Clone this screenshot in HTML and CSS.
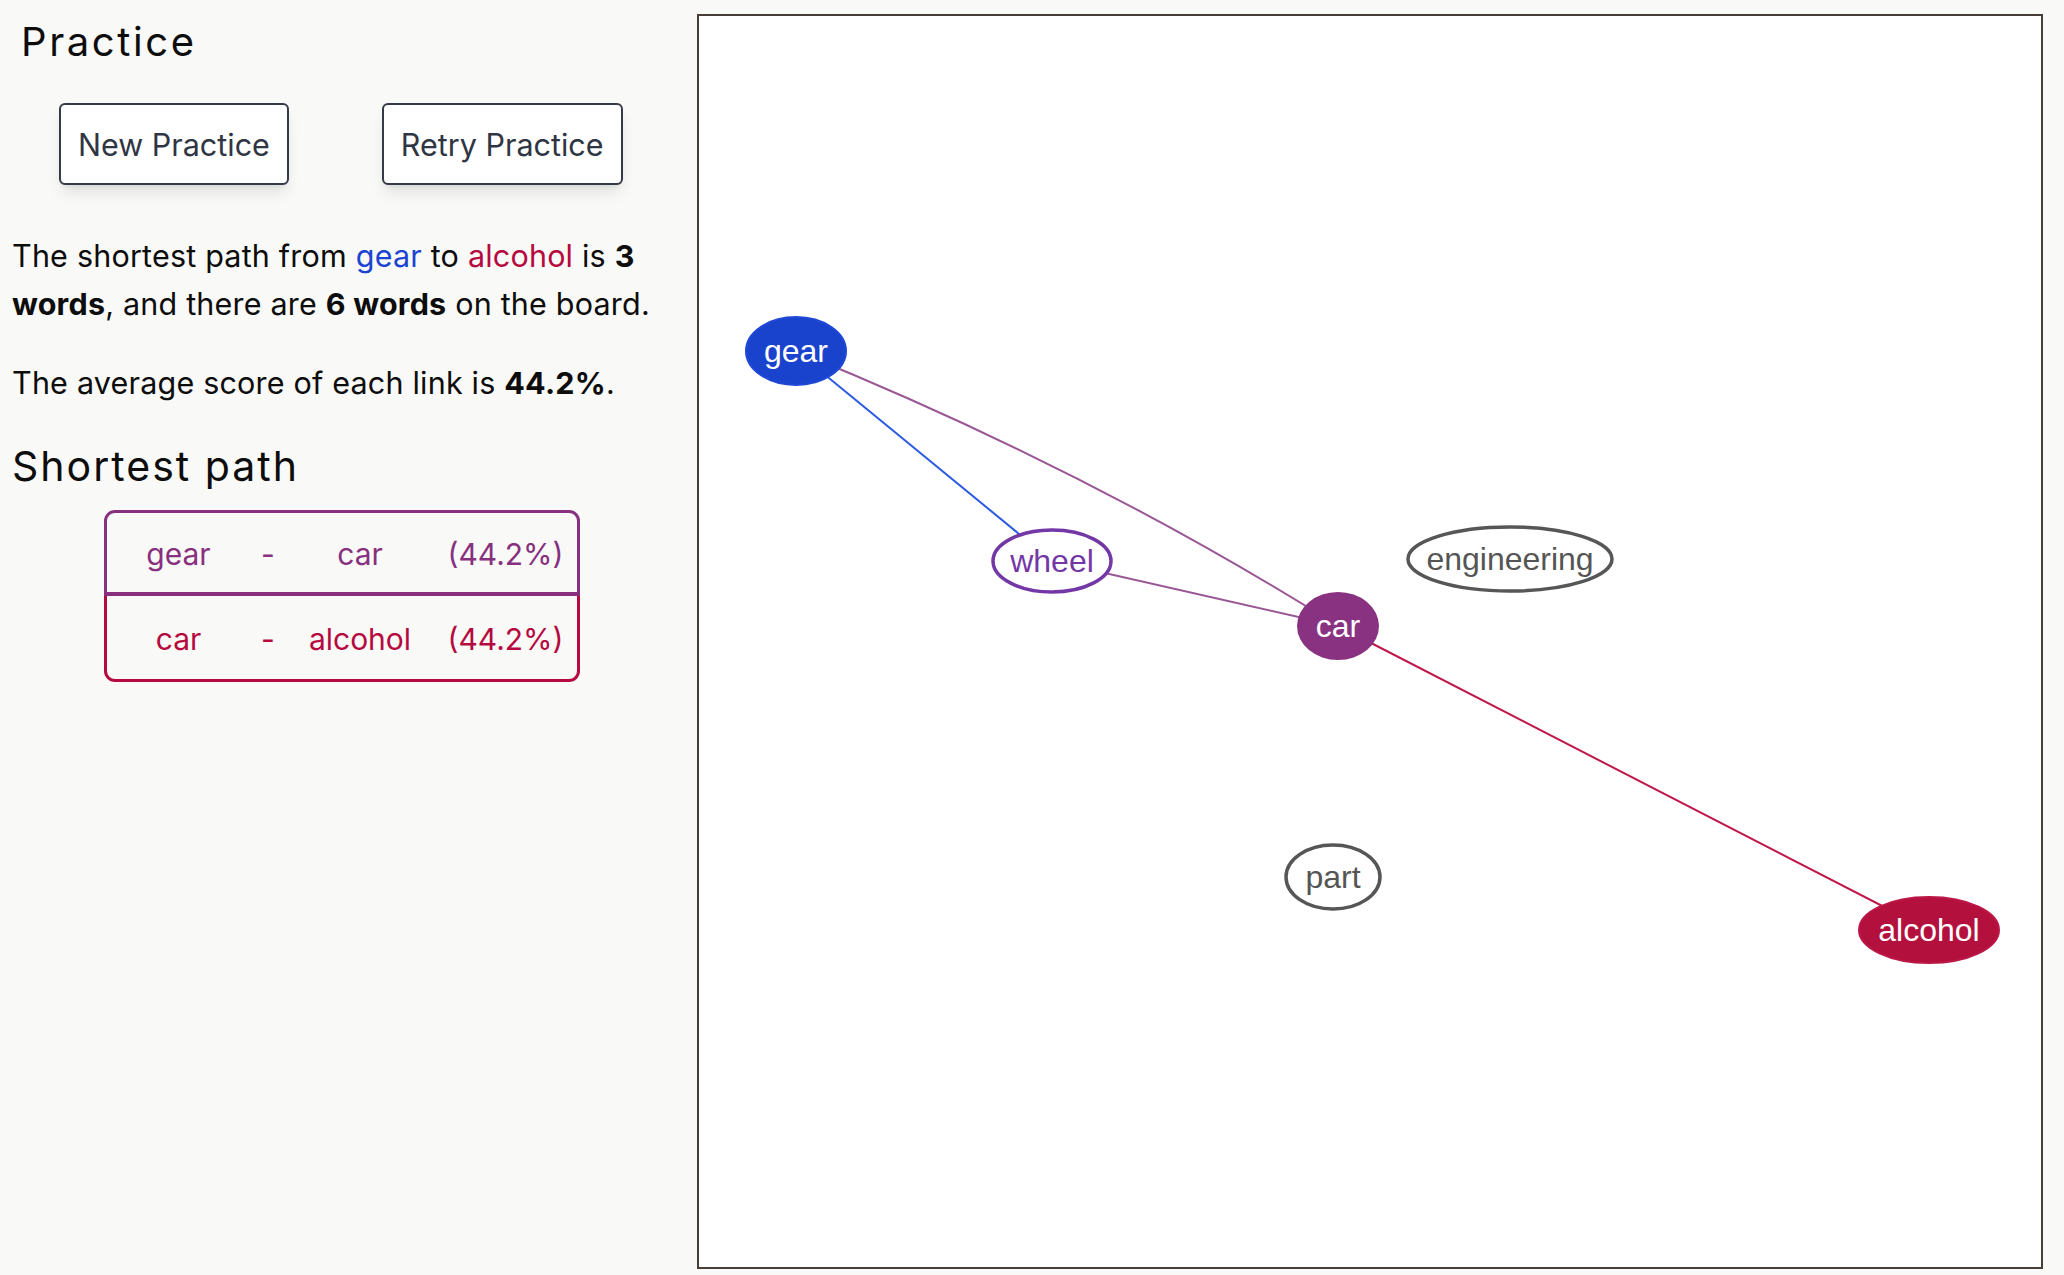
FILE: index.html
```html
<!DOCTYPE html>
<html lang="en">
  <head>
    <meta charset="UTF-8" />
    <meta name="viewport" content="width=device-width, initial-scale=1.0" />
    <title>Word Path Practice</title>
    <link rel="stylesheet" href="styles.css">
  </head>
  <body>
    <div class="layout">
      <aside class="sidebar">
        <h1>Practice</h1>
        <div class="actions">
          <button type="button">New Practice</button>
          <button type="button">Retry Practice</button>
        </div>
        <p>The shortest path from <span class="start">gear</span> to <span class="end">alcohol</span> is <b>3 words</b>, and there are <b>6 words</b> on the board.</p>
        <p>The average score of each link is <b>44.2%</b>.</p>
        <h2>Shortest path</h2>
        <div class="path">
          <div class="path-row first">
            <span>gear</span><span>-</span><span>car</span><span>(44.2%)</span>
          </div>
          <div class="path-row last">
            <span>car</span><span>-</span><span>alcohol</span><span>(44.2%)</span>
          </div>
        </div>
      </aside>

      <main class="board">
        <svg class="graph" viewBox="699 16 1342 1251" preserveAspectRatio="none">
          <!-- edges -->
          <line x1="796" y1="351" x2="1052" y2="561" stroke="#2a5be0" stroke-width="2" />
          <path d="M796 351 Q1090 470 1338 626" fill="none" stroke="#9a5796" stroke-width="2" />
          <line x1="1052" y1="561" x2="1338" y2="626" stroke="#9a5796" stroke-width="2" />
          <line x1="1338" y1="626" x2="1929" y2="930" stroke="#c0174a" stroke-width="2" />

          <!-- nodes -->
          <g class="node">
            <ellipse cx="796" cy="351" rx="50" ry="34" fill="#1a43cd" stroke="#1f49d6" stroke-width="2" />
            <text x="796" y="351" fill="#fff">gear</text>
          </g>
          <g class="node">
            <ellipse cx="1052" cy="561" rx="59" ry="31" fill="#fff" stroke="#7338a6" stroke-width="3.5" />
            <text x="1052" y="561" fill="#7338a6">wheel</text>
          </g>
          <g class="node">
            <ellipse cx="1338" cy="626" rx="41" ry="34" fill="#8a3282" />
            <text x="1338" y="626" fill="#fff">car</text>
          </g>
          <g class="node">
            <ellipse cx="1510" cy="559" rx="102" ry="32" fill="#fff" stroke="#565656" stroke-width="3.5" />
            <text x="1510" y="559" fill="#555">engineering</text>
          </g>
          <g class="node">
            <ellipse cx="1333" cy="877" rx="47" ry="32" fill="#fff" stroke="#565656" stroke-width="3.5" />
            <text x="1333" y="877" fill="#555">part</text>
          </g>
          <g class="node">
            <ellipse cx="1929" cy="930" rx="70" ry="33" fill="#b3103e" stroke="#bb1747" stroke-width="2" />
            <text x="1929" y="930" fill="#fff">alcohol</text>
          </g>
        </svg>
      </main>
    </div>
  </body>
</html>
```

FILE: styles.css
```css
:root {
  --page-bg: #f9f9f7;
  --text-color: #0d0d0d;
  --button-text: #2f3542;
  --button-border: #343b47;
  --start-color: #1b45d1;
  --end-color: #b5093f;
  --mid-color: #87307f;
  --board-border: #463f39;
  --font-family: 'Inter', 'Lato', sans-serif;
}

* {
  box-sizing: border-box;
}

body {
  margin: 0;
  font-family: var(--font-family);
  background: var(--page-bg);
  color: var(--text-color);
}

.layout {
  display: flex;
  height: 1275px;
  padding: 14px 21px 6px 0;
}

.sidebar {
  width: 697px;
  flex: none;
  padding-left: 12px;
}

h1 {
  margin: 0;
  padding: 4px 0 0 9px;
  font-size: 40px;
  font-weight: 400;
  line-height: 48px;
  letter-spacing: 2.6px;
}

.actions {
  display: flex;
  gap: 93px;
  padding-left: 47px;
  margin-top: 37px;
}

button {
  font-family: var(--font-family);
  font-size: 30.5px;
  color: var(--button-text);
  background: #fff;
  border: 2px solid var(--button-border);
  border-radius: 6px;
  height: 82px;
  padding: 0 17px;
  box-shadow: 0 10px 15px -3px rgba(0, 0, 0, 0.1), 0 4px 6px -4px rgba(0, 0, 0, 0.1);
  cursor: pointer;
}

p {
  margin: 0;
  font-size: 30.5px;
  line-height: 48px;
  letter-spacing: 0.2px;
}

.actions + p {
  margin-top: 47px;
}

p + p {
  margin-top: 31px;
}

b {
  font-weight: 700;
}

.start {
  color: var(--start-color);
}

.end {
  color: var(--end-color);
}

h2 {
  margin: 34px 0 0;
  font-size: 41px;
  font-weight: 400;
  line-height: 50px;
  letter-spacing: 2px;
}

.path {
  width: 476px;
  margin: 19px 0 0 92px;
  font-size: 30px;
}

.path-row {
  display: grid;
  grid-template-columns: 143px 36px 148px 143px;
  align-items: center;
  text-align: center;
  height: 86px;
  padding-top: 3px;
  border: 3px solid var(--mid-color);
  color: var(--mid-color);
}

.path-row.first {
  border-radius: 11px 11px 0 0;
  border-bottom-width: 4px;
}

.path-row.last {
  border-color: var(--end-color);
  border-top: none;
  border-radius: 0 0 11px 11px;
  color: var(--end-color);
}

.board {
  flex: 1;
  background: #fff;
  border: 2px solid var(--board-border);
}

.graph {
  display: block;
  width: 100%;
  height: 100%;
}

.node text {
  font-family: 'Liberation Sans', Arial, sans-serif;
  font-size: 32px;
  text-anchor: middle;
  dominant-baseline: central;
}
```
